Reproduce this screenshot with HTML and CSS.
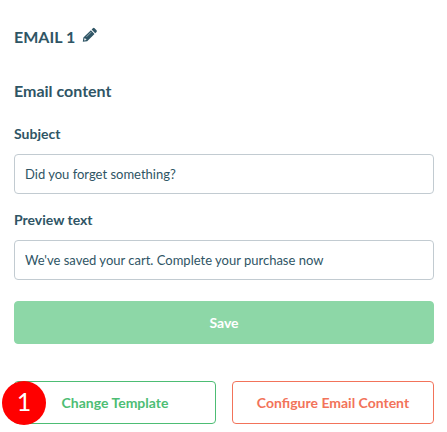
FILE: index.html
```html
<!DOCTYPE html>
<html lang="en">
<head>
    <meta charset="UTF-8">
    <meta name="viewport" content="width=device-width, initial-scale=1.0">
    <title>Email 1</title>
    <link rel="stylesheet" href="styles.css">
</head>
<body>

    <form class="email-form">
        <div class="title-row">
            <h1 class="title">EMAIL 1</h1>
            <button type="button" class="edit-btn" aria-label="Edit name">
                <svg viewBox="0 0 16 16" width="16" height="16" aria-hidden="true">
                    <path fill="currentColor" d="M10.900 1.300a1.200 1.200 0 0 1 1.700 0l1.900 1.900a1.200 1.200 0 0 1 0 1.700l-1.300 1.300-3.600-3.600z"/>
                    <path fill="currentColor" fill-rule="evenodd" d="M8.900 3.300l3.600 3.600-7.300 7.300-4.400.6.600-4.200zM2.500 11.300l-.4 2.200 2.200-.4v-.9h-.9v-.9z"/>
                    <path stroke="white" stroke-width=".5" d="M4.500 9.800l4.700-4.700"/>
                </svg>
            </button>
        </div>

        <h2 class="section-title">Email content</h2>

        <div class="field">
            <label for="subject">Subject</label>
            <input type="text" id="subject" value="Did you forget something?">
        </div>
        <div class="field">
            <label for="preview">Preview text</label>
            <input type="text" id="preview" value="We've saved your cart. Complete your purchase now">
        </div>

        <button type="submit" class="btn save">Save</button>

        <div class="actions">
            <div class="step">
                <button type="button" class="btn green">Change Template</button>
                <span class="badge">1</span>
            </div>
            <button type="button" class="btn orange">Configure Email Content</button>
        </div>
    </form>

</body>
</html>
```
FILE: styles.css
```css
* { box-sizing: border-box; }
body {
    margin: 0;
    font-family: Lato, sans-serif;
    background: white;
    color: #2f5565;
}
.email-form { padding: 25px 13px 7px 14px; }
.title-row {
    display: flex;
    align-items: center;
    gap: 7px;
    height: 24px;
    margin-bottom: 30px;
}
.title, .section-title {
    margin: 0;
    font-size: 16px;
    line-height: 24px;
    font-weight: bold;
}
.edit-btn {
    display: flex;
    padding: 0 0 4px;
    border: none;
    background: none;
    color: #2f5565;
    cursor: pointer;
}
.section-title { margin-bottom: 21px; }
.field { margin-bottom: 16px; }
.field label {
    display: block;
    margin-bottom: 10px;
    font-size: 14px;
    line-height: 20px;
    font-weight: bold;
}
.field input {
    display: block;
    width: 100%;
    height: 40px;
    padding: 0 10px;
    border: 1px solid #c2cbd1;
    border-radius: 4px;
    background: white;
    font-family: inherit;
    font-size: 13px;
    color: #2f5565;
}
.btn {
    display: block;
    width: 100%;
    height: 43px;
    padding: 0 8px;
    border: 1px solid;
    border-radius: 4px;
    background: white;
    font-family: inherit;
    font-size: 14px;
    font-weight: bold;
    cursor: pointer;
}
.save {
    margin-top: 21px;
    border-color: #8dd7a7;
    background: #8dd7a7;
    color: white;
}
.green { color: #4dbd74; }
.orange { color: #f2735a; }
.actions {
    display: grid;
    grid-template-columns: 1fr 1fr;
    gap: 16px;
    margin-top: 37px;
}
.step { position: relative; }
.badge {
    position: absolute;
    top: 0;
    left: -12px;
    width: 44px;
    height: 44px;
    border-radius: 50%;
    background: #ff0000;
    color: white;
    font-size: 25px;
    line-height: 40px;
    text-align: center;
}
```
